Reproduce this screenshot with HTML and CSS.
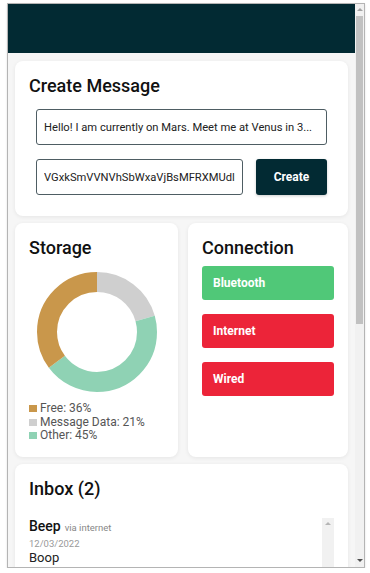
FILE: index.html
```html
<!DOCTYPE html>
<html lang="en">
<head>
    <meta charset="UTF-8">
    <meta name="viewport" content="width=device-width, initial-scale=1.0">
    <title>Messenger</title>
    <link rel="stylesheet" href="styles.css">
</head>
<body>
    <div class="frame">
        <div class="viewport">
            <header class="topbar"></header>
            <main class="page">
                <section class="card">
                    <h2 class="card-title">Create Message</h2>
                    <div class="form">
                        <input type="text" class="field" value="Hello! I am currently on Mars. Meet me at Venus in 3..." readonly>
                        <div class="form-row">
                            <input type="text" class="field key" value="VGxkSmVVNVhSbWxaVjBsMFRXMUdlbEl" readonly>
                            <button class="create-btn">Create</button>
                        </div>
                    </div>
                </section>

                <div class="row">
                    <section class="card storage">
                        <h2 class="card-title">Storage</h2>
                        <svg class="donut" width="120" height="120" viewBox="0 0 120 120">
                            <g transform="rotate(-90 60 60)" fill="none" stroke-width="20">
                                <circle cx="60" cy="60" r="50" stroke="#cfcfcf" stroke-dasharray="64.7 314.16" stroke-dashoffset="0"></circle>
                                <circle cx="60" cy="60" r="50" stroke="#8fd2b4" stroke-dasharray="138.6 314.16" stroke-dashoffset="-64.7"></circle>
                                <circle cx="60" cy="60" r="50" stroke="#c9974b" stroke-dasharray="110.9 314.16" stroke-dashoffset="-203.3"></circle>
                            </g>
                        </svg>
                        <ul class="legend">
                            <li><span class="swatch free"></span>Free: 36%</li>
                            <li><span class="swatch data"></span>Message Data: 21%</li>
                            <li><span class="swatch other"></span>Other: 45%</li>
                        </ul>
                    </section>
                    <section class="card connection">
                        <h2 class="card-title">Connection</h2>
                        <button class="conn on">Bluetooth</button>
                        <button class="conn off">Internet</button>
                        <button class="conn off">Wired</button>
                    </section>
                </div>

                <section class="card inbox">
                    <h2 class="card-title">Inbox (2)</h2>
                    <div class="messages">
                        <div class="message-list">
                            <div class="message">
                                <div class="msg-head"><span class="msg-title">Beep</span> <span class="msg-via">via internet</span></div>
                                <div class="msg-date">12/03/2022</div>
                                <div class="msg-body">Boop</div>
                            </div>
                        </div>
                        <div class="mini-scroll"><span class="tri up"></span></div>
                    </div>
                </section>
            </main>
        </div>
        <div class="scrollbar">
            <span class="tri up"></span>
            <div class="thumb"></div>
            <span class="tri down"></span>
        </div>
    </div>
</body>
</html>
```

FILE: styles.css
```css
body {
    margin: 0;
    background: #ffffff;
    font-family: Roboto, 'Liberation Sans', sans-serif;
    color: #111;
}
.frame {
    display: flex;
    margin: 3px 0 0 7px;
    width: 356px;
    height: 563px;
    border: 1px solid #b4b4b4;
    overflow: hidden;
    box-shadow: 0 1px 2px rgba(0, 0, 0, 0.12);
}
.viewport {
    width: 347px;
    height: 100%;
    overflow: hidden;
    background: #f6f6f6;
}
.topbar {
    height: 49px;
    background: #022a33;
}
.page {
    display: flex;
    flex-direction: column;
    gap: 7px;
    padding: 8px 7px 0 7px;
}
.card {
    background: #fff;
    border-radius: 8px;
    box-shadow: 0 1px 4px rgba(0, 0, 0, 0.07);
    padding: 14px 14px 21px 14px;
}
.card-title {
    margin: 0;
    font-size: 18px;
    font-weight: 500;
    line-height: 22px;
    color: #111;
}
.form {
    display: flex;
    flex-direction: column;
    gap: 14px;
    padding: 12px 7px 0 7px;
}
.form-row {
    display: flex;
    gap: 13px;
}
.field {
    box-sizing: border-box;
    height: 36px;
    width: 100%;
    padding: 0 7px;
    border: 1px solid #4e5d63;
    border-radius: 3px;
    font-family: Roboto, 'Liberation Sans', sans-serif;
    font-size: 11.2px;
    color: #222;
    background: #fff;
    outline: none;
}
.field.key {
    width: 207px;
    flex: none;
}
.create-btn {
    flex: 1;
    height: 36px;
    border: none;
    border-radius: 3px;
    background: #022a33;
    color: #fff;
    font-family: Roboto, 'Liberation Sans', sans-serif;
    font-size: 12px;
    font-weight: 700;
    box-shadow: 0 1px 3px rgba(0, 0, 0, 0.2);
}
.row {
    display: grid;
    grid-template-columns: 163px 160px;
    gap: 10px;
}
.row .card {
    height: 234px;
    box-sizing: border-box;
}
.donut {
    display: block;
    margin: 13px auto 0 auto;
}
.legend {
    list-style: none;
    margin: 10px 0 0 0;
    padding: 0;
    font-size: 12px;
    line-height: 13.5px;
    color: #555;
}
.legend li {
    display: flex;
    align-items: center;
}
.swatch {
    width: 8px;
    height: 7px;
    margin-right: 3px;
}
.swatch.free { background: #c9974b; }
.swatch.data { background: #cfcfcf; }
.swatch.other { background: #8fd2b4; }
.connection {
    display: flex;
    flex-direction: column;
    gap: 14px;
}
.connection .card-title {
    margin-bottom: -7px;
}
.conn {
    height: 34px;
    border: none;
    border-radius: 3px;
    padding: 0 11px;
    text-align: left;
    color: #fff;
    font-family: Roboto, 'Liberation Sans', sans-serif;
    font-size: 12px;
    font-weight: 700;
}
.conn.on { background: #50c878; }
.conn.off { background: #ec2439; }
.inbox {
    height: 140px;
}
.messages {
    display: flex;
    margin-top: 18px;
    height: 80px;
}
.message-list {
    flex: 1;
}
.msg-head {
    line-height: 16px;
}
.msg-title {
    font-size: 14px;
    font-weight: 500;
}
.msg-via {
    font-size: 9.5px;
    color: #888;
}
.msg-date {
    font-size: 9.5px;
    color: #999;
    margin-top: 2px;
}
.msg-body {
    font-size: 13px;
    color: #222;
    margin-top: 1px;
}
.mini-scroll {
    width: 12px;
    background: #f1f1f1;
    display: flex;
    justify-content: center;
    padding-top: 4px;
}
.scrollbar {
    width: 9px;
    background: #f1f1f1;
    display: flex;
    flex-direction: column;
    align-items: center;
}
.thumb {
    width: 7px;
    height: 308px;
    margin-top: 5px;
    background: #c1c1c1;
}
.tri {
    width: 0;
    height: 0;
    border-left: 3px solid transparent;
    border-right: 3px solid transparent;
}
.tri.up {
    border-bottom: 3px solid #a3a3a3;
    margin-top: 4px;
}
.tri.down {
    border-top: 3px solid #505050;
    margin-top: auto;
    margin-bottom: 5px;
}
.mini-scroll .tri.up {
    border-bottom-color: #b5b5b5;
    margin-top: 0;
}
```
